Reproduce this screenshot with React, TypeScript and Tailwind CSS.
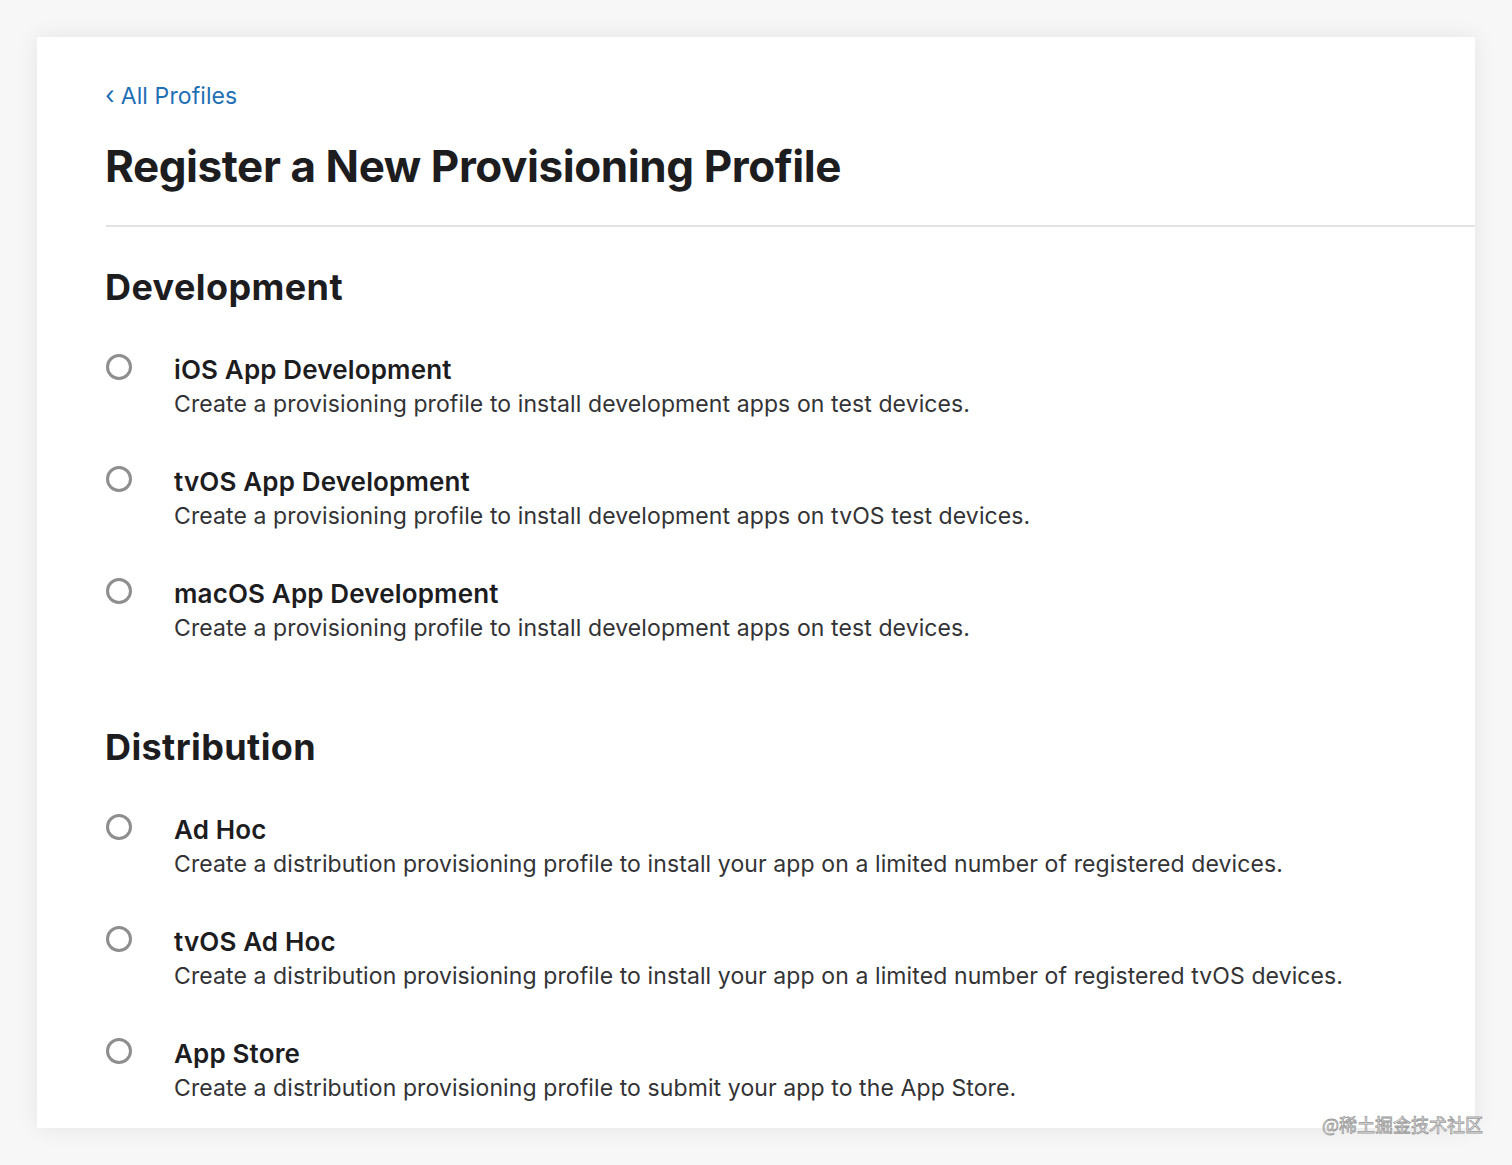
import React from "react";

const dev = [
  { t: "iOS App Development", d: "Create a provisioning profile to install development apps on test devices." },
  { t: "tvOS App Development", d: "Create a provisioning profile to install development apps on tvOS test devices." },
  { t: "macOS App Development", d: "Create a provisioning profile to install development apps on test devices." },
];
const dist = [
  { t: "Ad Hoc", d: "Create a distribution provisioning profile to install your app on a limited number of registered devices." },
  { t: "tvOS Ad Hoc", d: "Create a distribution provisioning profile to install your app on a limited number of registered tvOS devices." },
  { t: "App Store", d: "Create a distribution provisioning profile to submit your app to the App Store." },
];

function Item({ t, d }: { t: string; d: string }) {
  return (
    <div className="flex items-start">
      <div className="w-[26px] h-[26px] rounded-full border-[3px] border-[#8e8e8e] bg-white shrink-0" />
      <div className="ml-[42px] flex flex-col">
        <div className="text-[26px] leading-[32px] font-semibold text-[#1d1d1f] tracking-[0.15px]">{t}</div>
        <div className="mt-[3px] text-[23px] leading-[30px] text-[#333336] tracking-[0.1px]">{d}</div>
      </div>
    </div>
  );
}

export default function App() {
  return (
    <div
      className="relative w-[1512px] h-[1165px] bg-[#f7f7f7] pt-[37px] pl-[37px] overflow-hidden"
      style={{ fontFamily: "Inter, 'Noto Sans', 'Liberation Sans', sans-serif" }}
    >
      <div className="w-[1438px] h-[1091px] bg-white shadow-[0_0_22px_rgba(0,0,0,0.08)] pl-[69px] pt-[45px] overflow-hidden">
        <a className="flex items-center text-[23px] leading-[28px] text-[#1f6fb5] tracking-[0.1px]" href="#">
          <span className="mr-[6px] text-[25px] leading-[28px] -mt-[2px] -ml-[1px]">‹</span>
          <span>All Profiles</span>
        </a>
        <h1 className="mt-[30px] text-[44px] leading-[52px] font-bold text-[#1d1d1f] tracking-[-0.42px] -ml-[1px]">
          Register a New Provisioning Profile
        </h1>
        <div className="mt-[33px] h-[2px] bg-[#e3e3e3]" />
        <h2 className="mt-[38px] text-[36px] leading-[44px] font-bold text-[#1d1d1f] tracking-[0.4px] -ml-[1px]">Development</h2>
        <div className="mt-[45px] flex flex-col gap-[47px]">
          {dev.map((x) => (
            <Item key={x.t} {...x} />
          ))}
        </div>
        <h2 className="mt-[82px] text-[36px] leading-[44px] font-bold text-[#1d1d1f] tracking-[0.4px] -ml-[1px]">Distribution</h2>
        <div className="mt-[45px] flex flex-col gap-[47px]">
          {dist.map((x) => (
            <Item key={x.t} {...x} />
          ))}
        </div>
      </div>
      <div
        className="absolute left-[1322px] top-[1112px] text-[18px] leading-[24px] text-white [-webkit-text-stroke:0.8px_#9a9a9a]"
        style={{ fontFamily: "'Noto Sans CJK SC', sans-serif" }}
      >
        @稀土掘金技术社区
      </div>
    </div>
  );
}
